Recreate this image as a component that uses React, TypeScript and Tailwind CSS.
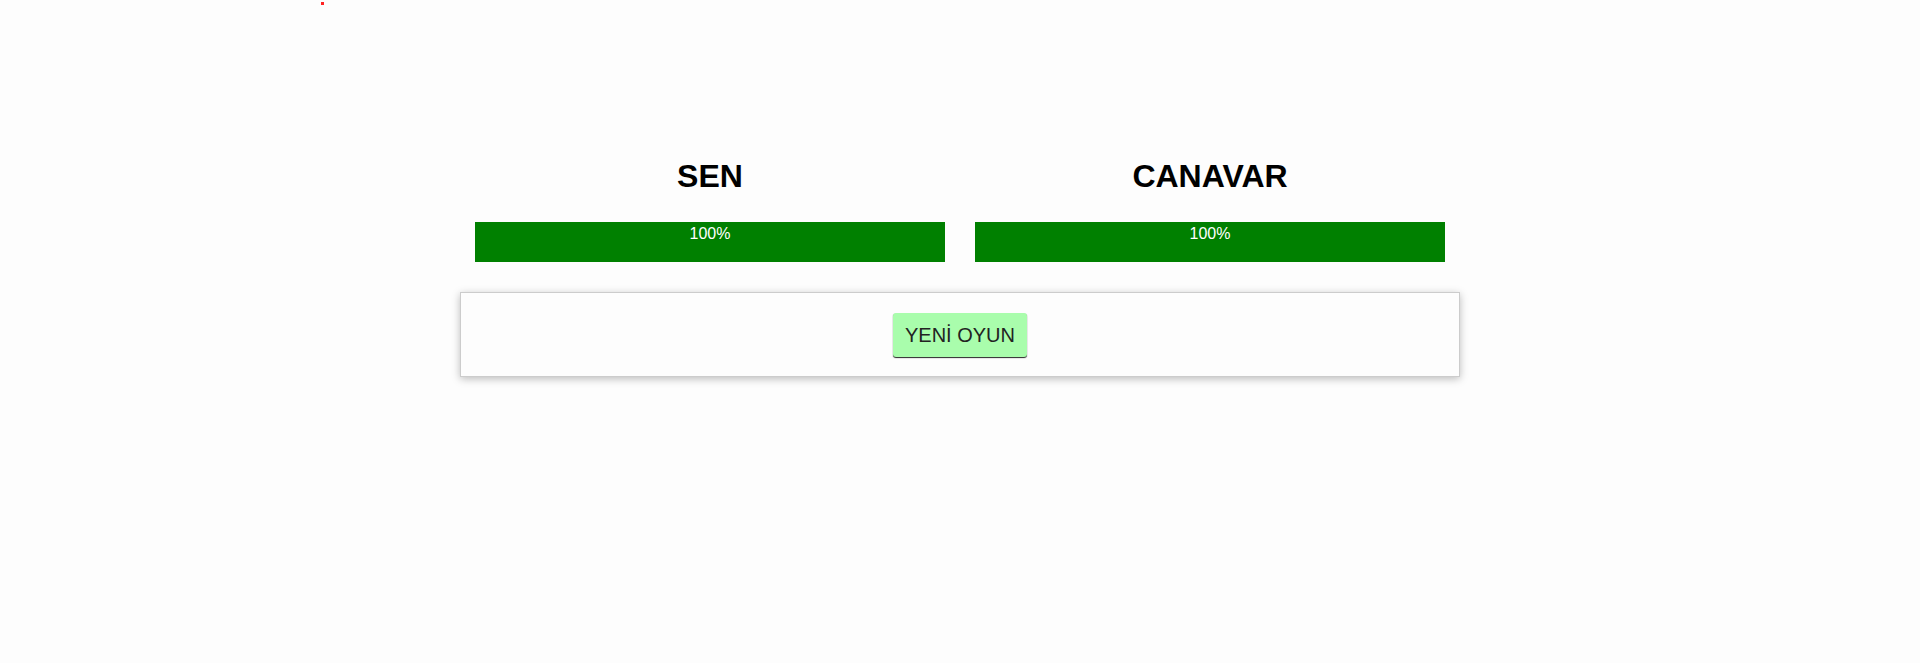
import React from "react";

const fighters = [
  { name: "SEN", health: 100 },
  { name: "CANAVAR", health: 100 },
];

export default function App() {
  return (
    <div className="relative min-h-screen bg-[#fdfdfd] font-['Liberation_Sans',Arial,sans-serif]">
      {/* stray marker in the top-left */}
      <span className="absolute left-[321px] top-[2px] h-[3px] w-[3px] bg-[#f22]" />

      <div className="mx-auto w-[1000px] pt-[158px]">
        <div className="flex">
          {fighters.map((f) => (
            <section key={f.name} className="w-1/2 px-[15px]">
              <h1 className="text-center text-[32px] font-bold leading-[37px] text-black">
                {f.name}
              </h1>
              <div className="mt-[27px] h-[40px] bg-[#ddd]">
                <div
                  className="h-full bg-[#008000] text-center text-[16px] leading-[24px] text-white"
                  style={{ width: `${f.health}%` }}
                >
                  {f.health}%
                </div>
              </div>
            </section>
          ))}
        </div>

        <section className="mt-[30px] flex justify-center border border-[#ccc] bg-[#fdfdfd] pb-[19px] pt-5 shadow-[0_2px_8px_rgba(0,0,0,0.26)]">
          <button className="h-[44px] rounded-[3px] bg-[#a9fdac] px-3 text-[20px] leading-[23px] text-[#222] shadow-[0_1px_1px_rgba(0,0,0,0.85)]">
            YENİ OYUN
          </button>
        </section>
      </div>
    </div>
  );
}
